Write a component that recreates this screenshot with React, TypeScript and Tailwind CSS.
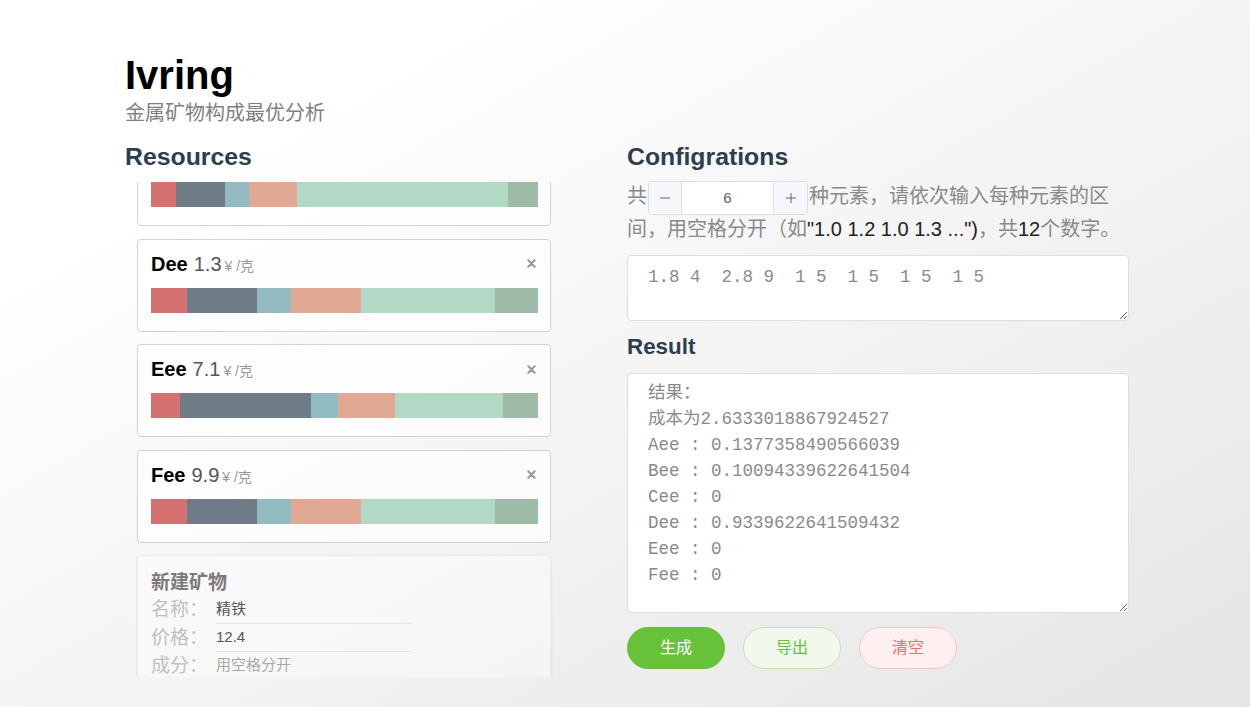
import React, { useEffect, useRef } from 'react';

const SEGMENT_COLORS = ['#d5716e', '#6f7c87', '#92bbc2', '#e1a893', '#b2d8c6', '#9dbba7'];

const resources = [
  { name: 'Aee', price: 5.2, parts: [30, 60, 25, 50, 180, 42] },
  { name: 'Bee', price: 3.6, parts: [40, 90, 30, 60, 130, 37] },
  { name: 'Cee', price: 2.1, parts: [25, 49, 24, 48, 211, 30] },
  { name: 'Dee', price: 1.3, parts: [36, 70, 34, 70, 134, 43] },
  { name: 'Eee', price: 7.1, parts: [29, 131, 27, 57, 108, 35] },
  { name: 'Fee', price: 9.9, parts: [36, 70, 34, 70, 134, 43] },
];

const resultText = `结果：
成本为2.6333018867924527
Aee : 0.1377358490566039
Bee : 0.10094339622641504
Cee : 0
Dee : 0.9339622641509432
Eee : 0
Fee : 0`;

const ResourceCard = ({ name, price, parts }: { name: string; price: number; parts: number[] }) => (
  <div className="shrink-0 rounded border border-[#d2d2d2] bg-white/70 pb-[18px] pl-[13px] pr-3 pt-3">
    {/* title row */}
    <div className="flex h-6 items-center justify-between">
      <div className="flex items-baseline">
        <span className="text-[20px] font-bold text-black">{name}</span>
        <span className="ml-[6px] text-[20px] text-[#555]">{price}</span>
        <span className="ml-[3px] text-[14px] text-[#999]">¥ /克</span>
      </div>
      <svg viewBox="0 0 10 10" className="mr-[2px] h-[9px] w-[9px]" stroke="#999" strokeWidth="2.3" strokeLinecap="round">
        <path d="M1.5 1.5 L8.5 8.5 M8.5 1.5 L1.5 8.5" />
      </svg>
    </div>
    {/* composition bar */}
    <div className="mt-3 flex h-[25px]">
      {parts.map((p, i) => (
        <div key={i} style={{ flexGrow: p, flexBasis: 0, backgroundColor: SEGMENT_COLORS[i] }} />
      ))}
    </div>
  </div>
);

const NewResourceCard = () => (
  <div className="shrink-0 rounded border border-[#ececec] bg-white/40 px-[13px] pb-4 pt-[14px] shadow-sm">
    <div className="text-[19px] font-bold leading-[26px] text-[#7a7a7a]">新建矿物</div>
    {[
      { label: '名称：', value: '精铁', placeholder: '' },
      { label: '价格：', value: '12.4', placeholder: '' },
      { label: '成分：', value: '', placeholder: '用空格分开' },
    ].map((row) => (
      <div key={row.label} className="flex h-[28px] items-center">
        <span className="w-[65px] text-[19px] text-[#c0c0c0]">{row.label}</span>
        <div className="flex h-full w-[196px] items-center border-b border-[#e6e6e6] text-[15px] text-[#555]">
          {row.value || <span className="text-[#aaa]">{row.placeholder}</span>}
        </div>
      </div>
    ))}
    <div className="mt-4 flex gap-3">
      <button className="h-8 rounded-full bg-[#409eff] px-5 text-[14px] text-white">添加</button>
    </div>
  </div>
);

const NumberInput = () => (
  <span className="mx-[1px] -my-1 inline-flex h-[34px] w-[160px] overflow-hidden rounded border border-[#dcdfe6] bg-white align-middle">
    <span className="flex w-[33px] items-center justify-center border-r border-[#dcdfe6] bg-[#f5f7fa]">
      <svg viewBox="0 0 12 12" className="h-3 w-3" stroke="#606266" strokeWidth="1">
        <path d="M1 6 H11" />
      </svg>
    </span>
    <span className="flex flex-1 items-center justify-center text-[15px] leading-none text-[#606266]">6</span>
    <span className="flex w-[34px] items-center justify-center border-l border-[#dcdfe6] bg-[#f5f7fa]">
      <svg viewBox="0 0 12 12" className="h-3 w-3" stroke="#606266" strokeWidth="1">
        <path d="M1 6 H11 M6 1 V11" />
      </svg>
    </span>
  </span>
);

export default function App() {
  const listRef = useRef<HTMLDivElement>(null);

  // list is shown scrolled down to the last few minerals
  useEffect(() => {
    if (listRef.current) listRef.current.scrollTop = 260;
  }, []);

  return (
    <div className="min-h-screen w-full bg-gradient-to-br from-white from-20% to-[#e5e5e5] pl-[125px] pt-[51px] font-['Liberation_Sans','Noto_Sans_CJK_SC',sans-serif]">
      <h1 className="text-[40px] font-bold leading-[48px] text-black">Ivring</h1>
      <div className="text-[20px] leading-[28px] text-[#808080]">金属矿物构成最优分析</div>

      <div className="mt-3 flex gap-16">
        {/* --- RESOURCES --- */}
        <div className="w-[438px]">
          <h2 className="text-[24.8px] font-bold leading-[36px] text-[#2c3e50]">Resources</h2>
          <div ref={listRef} className="mt-[7px] flex h-[495px] flex-col gap-[12.5px] overflow-y-auto px-3 [scrollbar-width:none]">
            {resources.map((r) => (
              <ResourceCard key={r.name} {...r} />
            ))}
            <NewResourceCard />
          </div>
        </div>

        {/* --- CONFIGURATIONS + RESULT --- */}
        <div className="w-[502px]">
          <h2 className="text-[24.8px] font-bold leading-[36px] text-[#2c3e50]">Configrations</h2>
          <p className="mt-[5px] text-[20px] leading-[33px] text-[#222]">
            <span className="text-[#8a8a8a]">共</span>
            <NumberInput />
            <span className="text-[#8a8a8a]">种元素，请依次输入每种元素的区间，用空格分开（如</span>"1.0 1.2 1.0 1.3 ...")
            <span className="text-[#8a8a8a]">，共</span>12<span className="text-[#8a8a8a]">个数字。</span>
          </p>
          <textarea
            readOnly
            value="1.8 4  2.8 9  1 5  1 5  1 5  1 5"
            className="mt-[9px] block h-[66px] w-full rounded border border-[#dcdfe6] bg-white pb-[5px] pl-5 pr-[15px] pt-2 font-['Liberation_Mono','Noto_Sans_CJK_SC',monospace] text-[17.5px] leading-[26px] text-[#8a8a8a] outline-none"
          />

          <h2 className="mt-2 text-[22.4px] font-bold leading-[36px] text-[#2c3e50]">Result</h2>
          <textarea
            readOnly
            value={resultText}
            className="mt-2 block h-[240px] w-full rounded border border-[#dcdfe6] bg-white pb-[5px] pl-5 pr-[15px] pt-[6px] font-['Liberation_Mono','Noto_Sans_CJK_SC',monospace] text-[17.5px] leading-[26px] text-[#8a8a8a] outline-none"
          />

          <div className="mt-[14px] flex gap-[18px]">
            <button className="h-[42px] w-[98px] rounded-full border border-[#67c23a] bg-[#67c23a] text-[16px] text-white">生成</button>
            <button className="h-[42px] w-[98px] rounded-full border border-[#c2e7b0] bg-[#f0f9eb] text-[16px] text-[#67c23a]">导出</button>
            <button className="h-[42px] w-[98px] rounded-full border border-[#fbc4c4] bg-[#fef0f0] text-[16px] text-[#f56c6c]">清空</button>
          </div>
        </div>
      </div>
    </div>
  );
}
